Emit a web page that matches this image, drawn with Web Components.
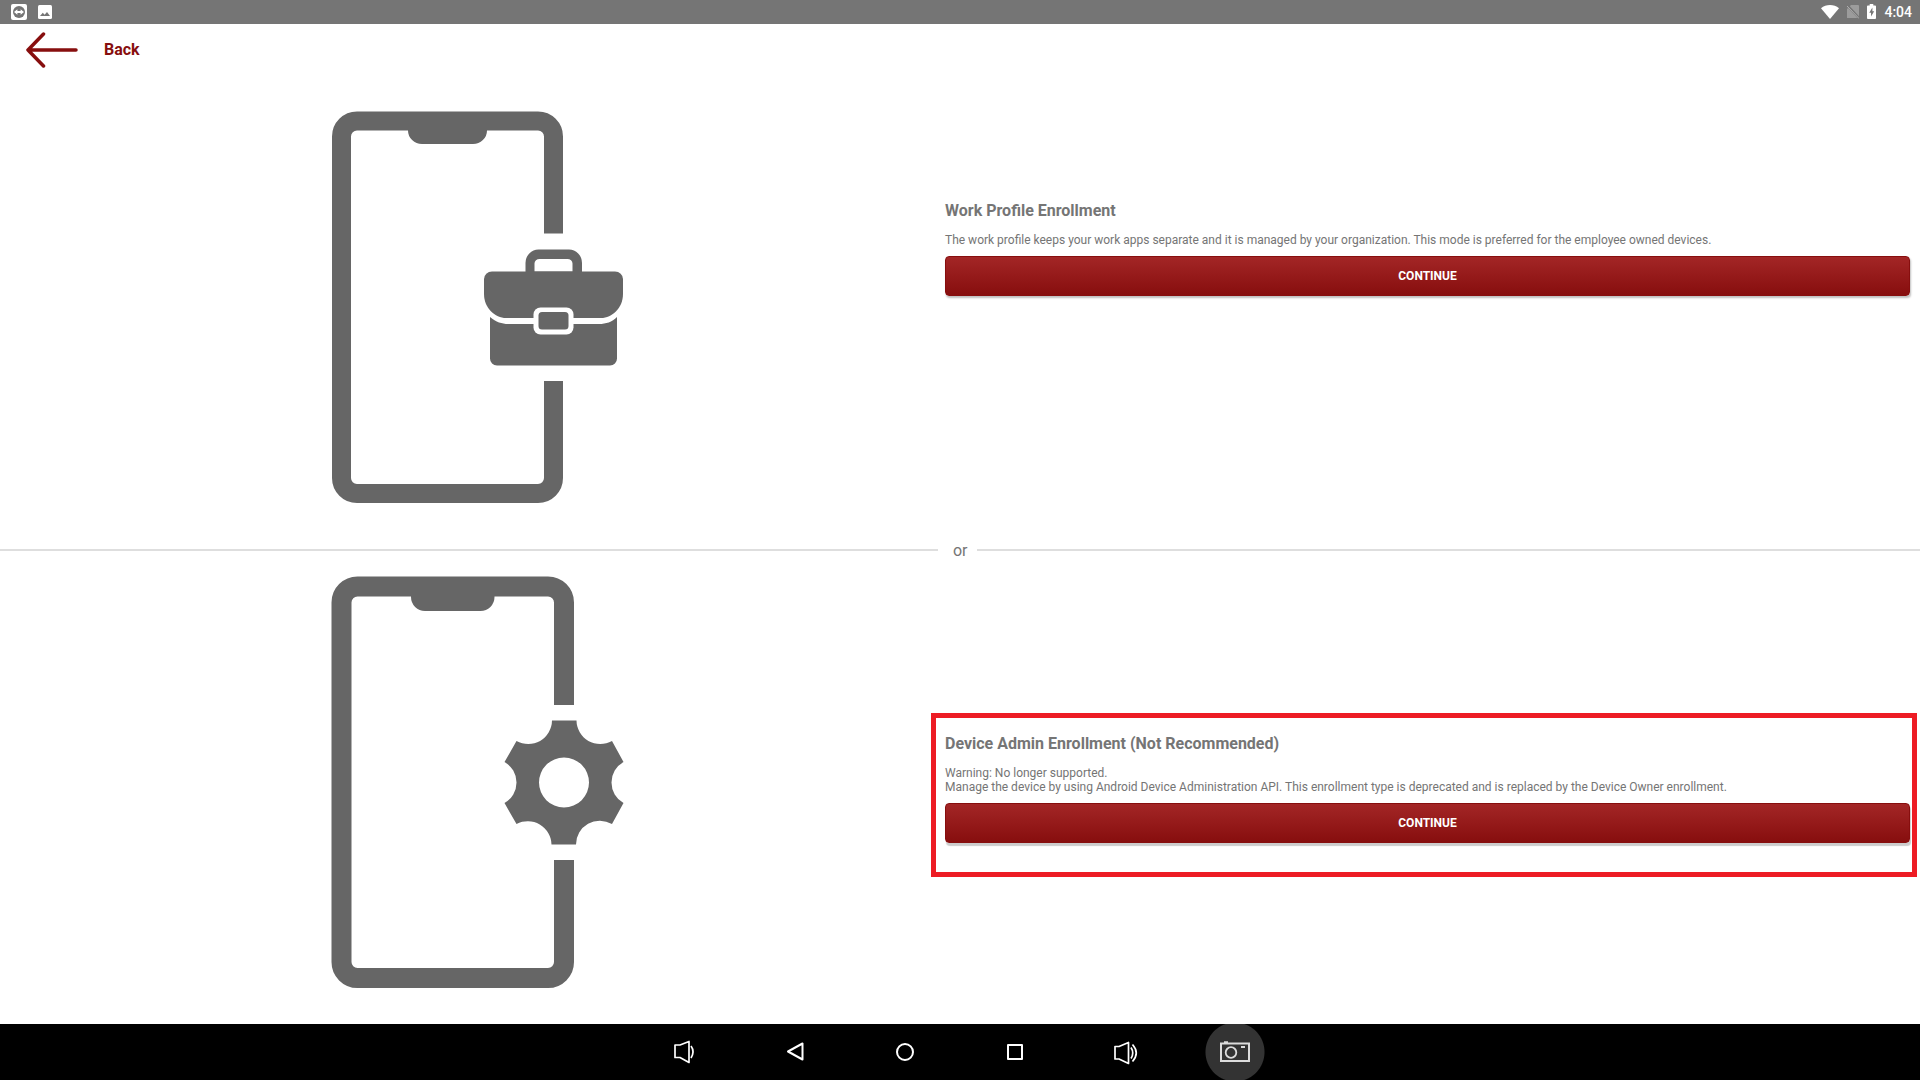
<!DOCTYPE html>
<html lang="en">
<head>
<meta charset="utf-8">
<title>Enrollment</title>
<style>
  html, body { height: 100%; }
  body { margin: 0; background: #fff; font-family: Roboto, "Liberation Sans", sans-serif; color: #757575; }
</style>
</head>
<body>
<enroll-app></enroll-app>
<script>
class BaseElement extends HTMLElement {
  connectedCallback() {
    if (this.shadowRoot) return;
    this.attachShadow({ mode: "open" }).innerHTML = this.render();
  }
}

customElements.define("status-bar", class extends BaseElement {
  render() {
    return `<style>
      :host { display: flex; align-items: center; justify-content: space-between; height: 24px; padding: 0 8px 0 11px; background: #757575; color: #fff; font-size: 14px; line-height: 24px; font-weight: 500; }
      div { display: flex; align-items: center; gap: 8px; }
      .left { gap: 11px; }
      svg { display: block; }
    </style>
    <div class="left">
      <svg width="16" height="16" viewBox="0 0 16 16"><rect width="16" height="16" rx="2" fill="#fff"/><circle cx="8" cy="8" r="6" fill="#757575"/><path d="M3 8l3.4-2.8v1.7h3.2V5.2L13 8l-3.4 2.8V9.1H6.4v1.7z" fill="#fff"/></svg>
      <svg width="14" height="14" viewBox="0 0 14 14"><rect width="14" height="14" rx="1.5" fill="#fff"/><path d="M2 11l2.8-3.3 1.8 2L9 7l3 4z" fill="#757575"/></svg>
    </div>
    <div>
      <svg width="18" height="14" viewBox="0 0 18 14"><path d="M0 3.2C5 -1 13 -1 18 3.2L9 14z" fill="#fff"/></svg>
      <svg width="12" height="14" viewBox="0 0 12 14"><path d="M4 0h7a1 1 0 0 1 1 1v12H0V4z" fill="#9c9c9c"/><path d="M0 0l12 13" stroke="#757575" stroke-width="2.500"/><path d="M0 1l12 12.500" stroke="#b0b0b0"/></svg>
      <svg width="9" height="16" viewBox="0 0 10 16" preserveAspectRatio="none"><path d="M3 0h4v1.500h2a1 1 0 0 1 1 1V14a1 1 0 0 1-1 1H1a1 1 0 0 1-1-1V2.500a1 1 0 0 1 1-1h2z" fill="#fff"/><path d="M6 3.500L2.500 8.700h2V12.500L8 7.300H6z" fill="#757575"/></svg>
      <time>4:04</time>
    </div>`;
  }
});

customElements.define("back-link", class extends BaseElement {
  render() {
    return `<style>
      :host { display: flex; height: 52px; padding: 0 26px; }
      button { display: flex; align-items: center; gap: 26px; padding: 0; border: 0; background: none; color: #870e0e; font: 700 16px/20px Roboto, sans-serif; cursor: pointer; }
    </style>
    <button type="button">
      <svg width="52" height="36" viewBox="0 0 52 36" fill="none" stroke="#870e0e" stroke-width="3.500" stroke-linecap="round" stroke-linejoin="round"><path d="M50 18H2M17.500 2L2 18l15.500 16"/></svg>
      <slot></slot>
    </button>`;
  }
});

customElements.define("phone-work", class extends BaseElement {
  render() {
    return `<style>:host { display: block; } svg { display: block; max-width: 100%; }</style>
    <svg width="291" height="392" viewBox="332 111 291 392" fill="#666" role="img" aria-label="Phone with briefcase">
      <path d="M553.500 233.500V136.500a15.500 15.500 0 0 0-15.500-15.500H357a15.500 15.500 0 0 0-15.500 15.500V478a15.500 15.500 0 0 0 15.500 15.500H538a15.500 15.500 0 0 0 15.500-15.500V381" fill="none" stroke="#666" stroke-width="19"/>
      <path d="M408 128V130.500a14 13.500 0 0 0 14 13.500H473a14 13.500 0 0 0 14-13.500V128z"/>
      <path fill-rule="evenodd" d="M525.500 272V263a13 13.500 0 0 1 13-13.500H569a13 13.500 0 0 1 13 13.500V272zM534.500 271.500H572.500V263.500a5 4.500 0 0 0-5-4.500H539.500a5 4.500 0 0 0-5 4.500z"/>
      <path d="M484 279a8 7.500 0 0 1 8-7.500H615a8 7.500 0 0 1 8 7.500V294C623 308 612 318 601 318H506C495 318 484 308 484 294z"/>
      <path d="M490 317C496 322 502 324 508 324H599C606 324 612 322 617 317V358.500a7 7 0 0 1-7 7H497a7 7 0 0 1-7-7z"/>
      <rect x="533.500" y="307.500" width="40" height="27" rx="7" fill="#fff"/>
      <rect x="538.500" y="312" width="30" height="17.500" rx="3.500"/>
    </svg>`;
  }
});

customElements.define("phone-admin", class extends BaseElement {
  render() {
    return `<style>:host { display: block; } svg { display: block; max-width: 100%; }</style>
    <svg width="293" height="412" viewBox="331 576 293 412" fill="#666" role="img" aria-label="Phone with gear">
      <path d="M564 705V602.500a16 16 0 0 0-16-16H357.500a16 16 0 0 0-16 16V962a16 16 0 0 0 16 16H548a16 16 0 0 0 16-16V860" fill="none" stroke="#666" stroke-width="20"/>
      <path d="M411 595V597a14 14 0 0 0 14 14H480.500a14 14 0 0 0 14-14V595z"/>
      <path fill-rule="evenodd" d="M552 720.500H576.500A23.800 23.800 0 0 0 612 741L623.500 762A23.500 23.500 0 0 0 623.500 803L612 824A23.800 23.800 0 0 0 576 844.500H551.500A23.800 23.800 0 0 0 516.500 824L504.500 803A23.500 23.500 0 0 0 504.500 762L516.500 741A23.800 23.800 0 0 0 552 720.500zM539 782.500a25 25 0 1 0 50 0a25 25 0 1 0-50 0z"/>
    </svg>`;
  }
});

customElements.define("enroll-option", class extends BaseElement {
  render() {
    return `<style>
      :host { display: grid; grid-template-columns: 187fr 193fr; align-items: center; padding: 0 10px; }
      .art { display: flex; justify-content: center; }
      .text { position: relative; margin: var(--text-margin, 0); }
      h2 { margin: 0 0 12px; padding-top: 1px; font-size: 16px; line-height: 20px; font-weight: 700; }
      p { margin: 0 0 9px; font-size: 12px; line-height: 14px; }
      button { display: block; width: 100%; height: 40px; padding: 0; border: 1px solid #870e0e; border-radius: 4px; background: linear-gradient(#a32626, #870e0e); color: #fff; font: 700 12px/14px Roboto, sans-serif; text-transform: uppercase; box-shadow: var(--button-shadow, 1px 2px 2px rgba(0,0,0,.25)); cursor: pointer; }
      .mark { display: none; }
      :host([highlighted]) .mark { display: block; position: absolute; inset: -20px -7px -34px -14px; border: 5px solid #ed1c24; pointer-events: none; }
    </style>
    <div class="art"><slot name="art"></slot></div>
    <div class="text">
      <h2><slot name="title"></slot></h2>
      <p><slot></slot></p>
      <button type="button">Continue</button>
      <div class="mark"></div>
    </div>`;
  }
});

customElements.define("or-divider", class extends BaseElement {
  render() {
    return `<style>
      :host { display: flex; align-items: center; font-size: 16px; line-height: 22px; }
      i { flex: 200; height: 2px; background: #dedede; }
      i:last-child { flex: 201; }
      span { padding: 2px 10px 0 15px; }
    </style><i></i><span><slot></slot></span><i></i>`;
  }
});

customElements.define("nav-bar", class extends BaseElement {
  render() {
    const icons = [
      ["Volume down", `<path d="M5 8H10L19 4.500V25.500L10 20.500H5zM21 9q4 5.500 0 12" stroke-width="1.700"/>`],
      ["Back", `<path d="M22.500 6.500V22.500L8 14.500z" stroke-width="2"/>`],
      ["Home", `<circle cx="15" cy="15" r="8" stroke-width="2"/>`],
      ["Recent apps", `<rect x="8" y="8" width="14" height="14" stroke-width="2"/>`],
      ["Volume up", `<path d="M5 9.500H9L18.500 5.500V26.500L9 22H5zM21 10.500q3.500 5.500 0 11M22.500 7.500q7.500 8.500 0 17" stroke-width="1.700"/>`],
      ["Screenshot", `<g stroke="#dcdcdc"><path d="M1 6.500H29V24H1z" stroke-width="2" stroke-linejoin="miter"/><circle cx="11" cy="15.500" r="5.300" stroke-width="1.800"/><path d="M4 5.200H8M21 10h4" stroke-width="2"/></g>`]
    ];
    return `<style>
      :host { display: flex; justify-content: center; height: 56px; background: #000; overflow: hidden; }
      button { display: flex; align-items: center; justify-content: center; width: 110px; padding: 0; border: 0; background: none; cursor: pointer; }
      button:last-child { background: radial-gradient(circle at center, #333 0 29px, transparent 30px); }
      svg { display: block; fill: none; stroke: #fff; stroke-linejoin: round; }
    </style>` + icons.map(([name, art]) =>
      `<button type="button" aria-label="${name}"><svg width="30" height="30" viewBox="0 0 30 30">${art}</svg></button>`).join("");
  }
});

customElements.define("enroll-app", class extends BaseElement {
  render() {
    return `<style>
      :host { display: flex; flex-direction: column; min-height: 100vh; }
      main { flex: 1; display: grid; grid-template-rows: 462fr 24px 440fr; padding-bottom: 22px; }
      .work { --text-margin: 0 0 118px; }
      .admin { --text-margin: 12px 0 0; --button-shadow: 1px 3px 1px rgba(0,0,0,.2); }
    </style>
    <status-bar></status-bar>
    <back-link>Back</back-link>
    <main>
      <enroll-option class="work">
        <phone-work slot="art"></phone-work>
        <span slot="title">Work Profile Enrollment</span>
        The work profile keeps your work apps separate and it is managed by your organization. This mode is preferred for the employee owned devices.
      </enroll-option>
      <or-divider>or</or-divider>
      <enroll-option class="admin" highlighted>
        <phone-admin slot="art"></phone-admin>
        <span slot="title">Device Admin Enrollment (Not Recommended)</span>
        Warning: No longer supported.<br>Manage the device by using Android Device Administration API. This enrollment type is deprecated and is replaced by the Device Owner enrollment.
      </enroll-option>
    </main>
    <nav-bar></nav-bar>`;
  }
});
</script>
</body>
</html>
